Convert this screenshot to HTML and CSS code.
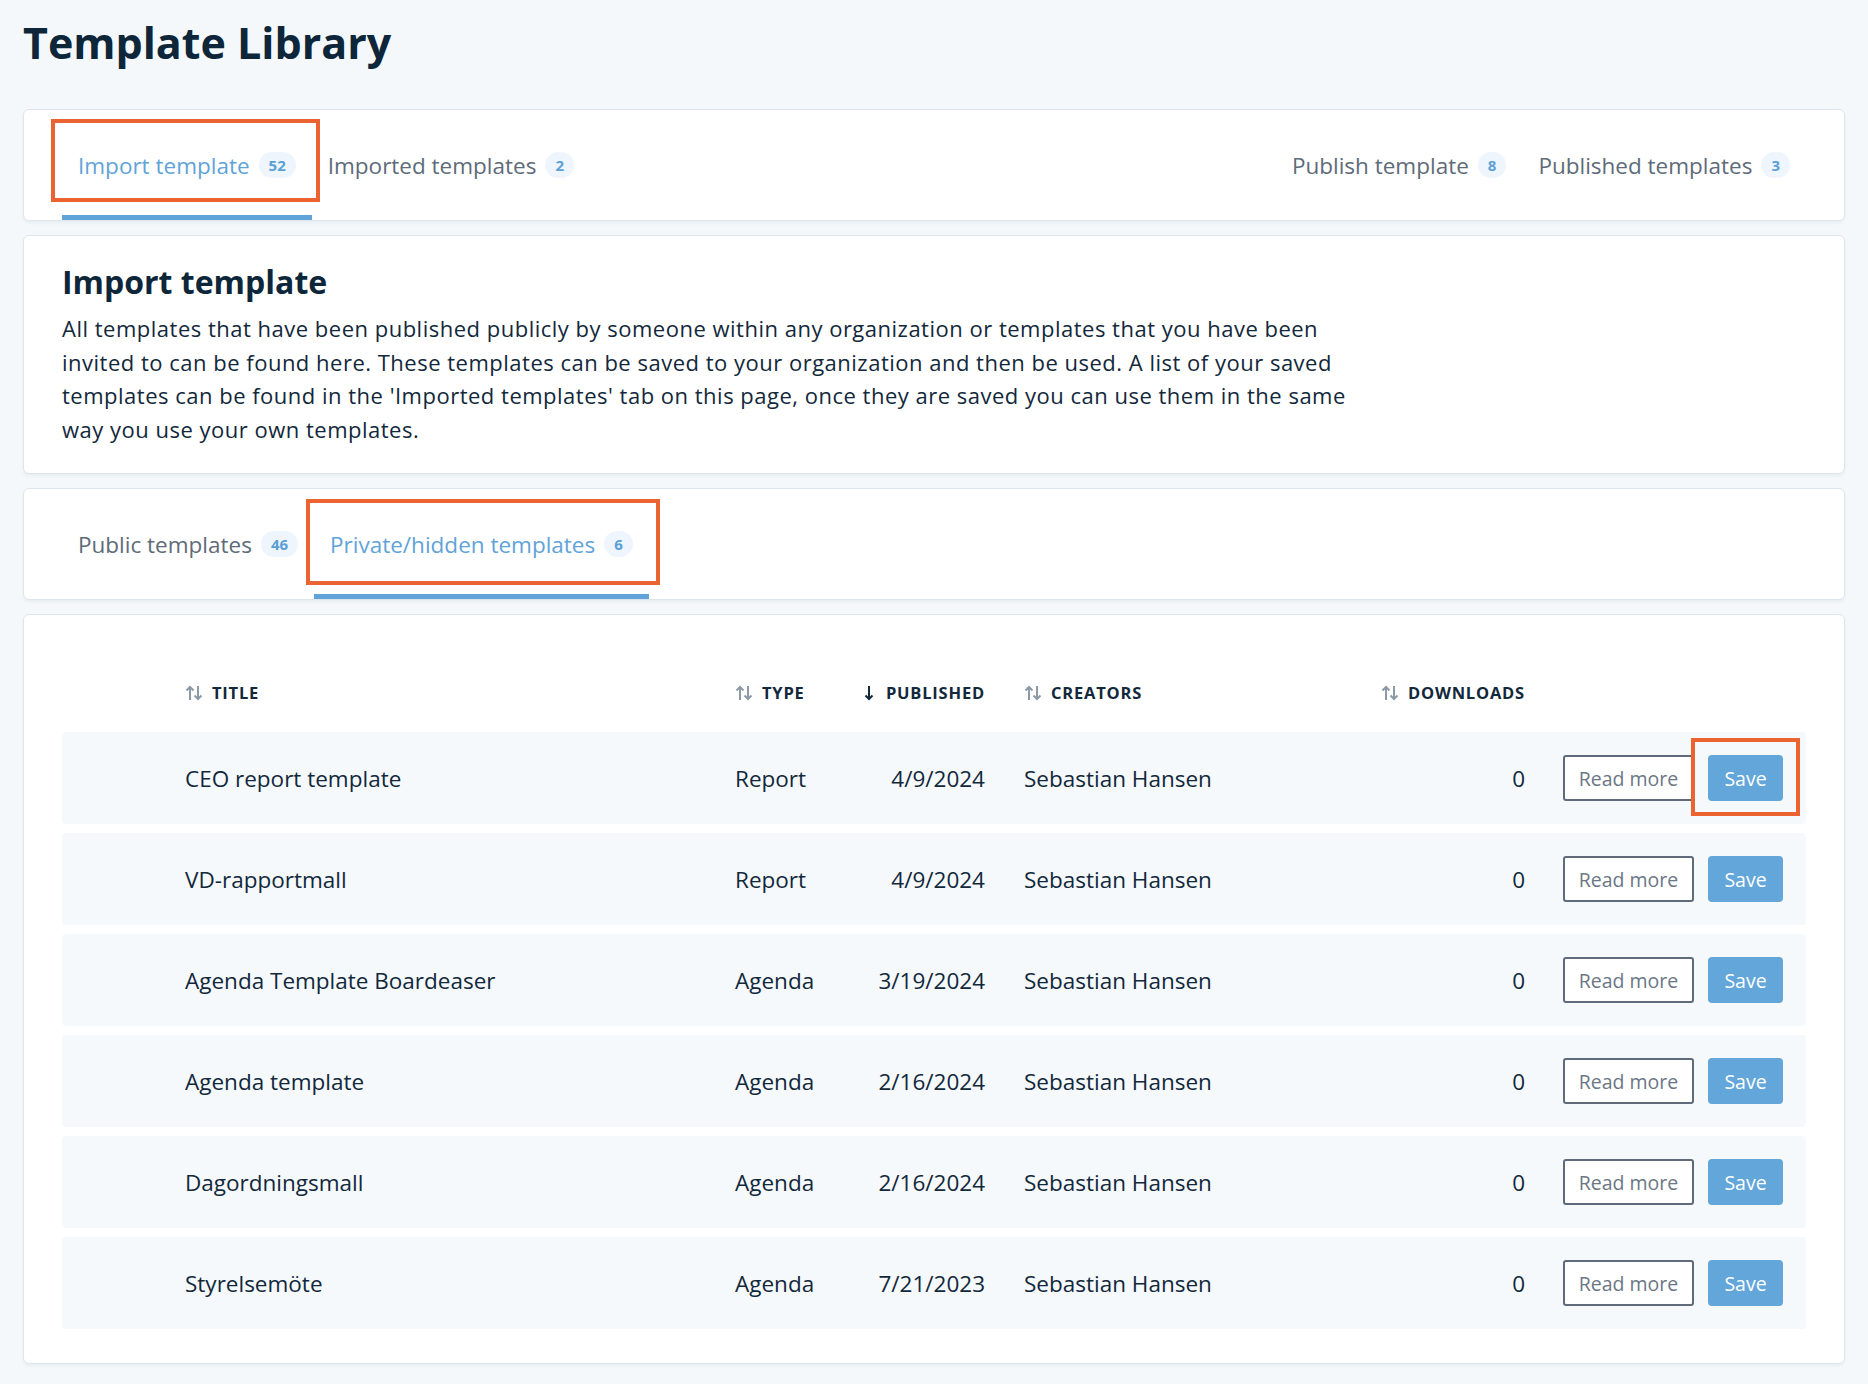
FILE: index.html
```html
<!DOCTYPE html>
<html lang="en">
<head>
    <meta charset="UTF-8">
    <meta name="viewport" content="width=device-width, initial-scale=1.0">
    <title>Template Library</title>
    <link rel="stylesheet" href="styles.css">
</head>
<body>

<main class="page">
    <h1 class="page-title">Template Library</h1>

    <div class="card tabs-card">
        <nav class="tabs">
            <div class="tab-group">
                <a class="tab active">Import template <span class="badge">52</span><span class="highlight hl-import"></span></a>
                <a class="tab">Imported templates <span class="badge">2</span></a>
            </div>
            <div class="tab-group">
                <a class="tab">Publish template <span class="badge">8</span></a>
                <a class="tab">Published templates <span class="badge">3</span></a>
            </div>
        </nav>
    </div>

    <section class="card intro-card">
        <h2 class="intro-title">Import template</h2>
        <p class="intro-text">All templates that have been published publicly by someone within any organization or templates that you have been invited to can be found here. These templates can be saved to your organization and then be used. A list of your saved templates can be found in the 'Imported templates' tab on this page, once they are saved you can use them in the same way you use your own templates.</p>
    </section>

    <div class="card tabs-card">
        <nav class="tabs">
            <div class="tab-group">
                <a class="tab">Public templates <span class="badge">46</span></a>
                <a class="tab active">Private/hidden templates <span class="badge">6</span><span class="highlight hl-private"></span></a>
            </div>
        </nav>
    </div>

    <section class="card table-card">
        <div class="table-head">
            <div></div>
            <div class="th"><svg class="sort-icon" viewBox="0 0 18 16"><path d="M5 15V2M1.5 5.5L5 2l3.5 3.5M13 1v13M9.5 10.5L13 14l3.5-3.5"/></svg>TITLE</div>
            <div class="th"><svg class="sort-icon" viewBox="0 0 18 16"><path d="M5 15V2M1.5 5.5L5 2l3.5 3.5M13 1v13M9.5 10.5L13 14l3.5-3.5"/></svg>TYPE</div>
            <div class="th right"><svg class="sort-icon down" viewBox="0 0 12 16"><path d="M6 1v13M2.5 10.5L6 14l3.5-3.5"/></svg>PUBLISHED</div>
            <div class="th creators"><svg class="sort-icon" viewBox="0 0 18 16"><path d="M5 15V2M1.5 5.5L5 2l3.5 3.5M13 1v13M9.5 10.5L13 14l3.5-3.5"/></svg>CREATORS</div>
            <div class="th right"><svg class="sort-icon" viewBox="0 0 18 16"><path d="M5 15V2M1.5 5.5L5 2l3.5 3.5M13 1v13M9.5 10.5L13 14l3.5-3.5"/></svg>DOWNLOADS</div>
            <div></div>
        </div>

        <div class="rows">
            <div class="row">
                <div></div>
                <div>CEO report template</div>
                <div>Report</div>
                <div class="right">4/9/2024</div>
                <div class="creators">Sebastian Hansen</div>
                <div class="right">0</div>
                <div class="actions"><button class="btn-outline">Read more</button><button class="btn-save">Save<span class="highlight hl-save"></span></button></div>
            </div>
            <div class="row">
                <div></div>
                <div>VD-rapportmall</div>
                <div>Report</div>
                <div class="right">4/9/2024</div>
                <div class="creators">Sebastian Hansen</div>
                <div class="right">0</div>
                <div class="actions"><button class="btn-outline">Read more</button><button class="btn-save">Save</button></div>
            </div>
            <div class="row">
                <div></div>
                <div>Agenda Template Boardeaser</div>
                <div>Agenda</div>
                <div class="right">3/19/2024</div>
                <div class="creators">Sebastian Hansen</div>
                <div class="right">0</div>
                <div class="actions"><button class="btn-outline">Read more</button><button class="btn-save">Save</button></div>
            </div>
            <div class="row">
                <div></div>
                <div>Agenda template</div>
                <div>Agenda</div>
                <div class="right">2/16/2024</div>
                <div class="creators">Sebastian Hansen</div>
                <div class="right">0</div>
                <div class="actions"><button class="btn-outline">Read more</button><button class="btn-save">Save</button></div>
            </div>
            <div class="row">
                <div></div>
                <div>Dagordningsmall</div>
                <div>Agenda</div>
                <div class="right">2/16/2024</div>
                <div class="creators">Sebastian Hansen</div>
                <div class="right">0</div>
                <div class="actions"><button class="btn-outline">Read more</button><button class="btn-save">Save</button></div>
            </div>
            <div class="row">
                <div></div>
                <div>Styrelsemöte</div>
                <div>Agenda</div>
                <div class="right">7/21/2023</div>
                <div class="creators">Sebastian Hansen</div>
                <div class="right">0</div>
                <div class="actions"><button class="btn-outline">Read more</button><button class="btn-save">Save</button></div>
            </div>
        </div>
    </section>
</main>

</body>
</html>
```

FILE: styles.css
```css
body {
    font-family: 'Open Sans', 'Lato', sans-serif;
    margin: 0;
    background-color: #f4f8fb;
    color: #12283b;
}
.page {
    padding: 15px 23px 22px;
    display: flex;
    flex-direction: column;
    gap: 14px;
}
.page-title {
    margin: 0 0 25px;
    font-size: 43px;
    line-height: 55px;
    font-weight: 700;
    color: #0d2639;
}
.card {
    background-color: #ffffff;
    border: 1px solid #dfe5ec;
    border-radius: 6px;
    box-shadow: 0 2px 3px rgba(30, 60, 90, 0.06);
}
.tabs-card {
    padding: 0 38px;
}
.tabs {
    display: flex;
    justify-content: space-between;
}
.tab-group {
    display: flex;
}
.tab {
    position: relative;
    display: flex;
    align-items: center;
    box-sizing: border-box;
    height: 110px;
    padding: 5px 16px 0;
    border-bottom: 5px solid transparent;
    font-size: 22.5px;
    color: #5e6b78;
    cursor: pointer;
}
.tab.active {
    color: #5fa3d8;
    border-bottom-color: #5fa3d8;
}
.badge {
    margin-left: 9px;
    height: 26px;
    min-width: 27px;
    padding: 0 10px;
    box-sizing: border-box;
    border-radius: 13px;
    background-color: #eef5fc;
    color: #5a9fd6;
    font-size: 15px;
    font-weight: 700;
    display: flex;
    align-items: center;
    justify-content: center;
}
.highlight {
    position: absolute;
    border: 4px solid #ea6330;
    pointer-events: none;
}
.hl-import {
    top: 9px;
    bottom: 13px;
    left: -11px;
    right: -8px;
}
.hl-private {
    top: 10px;
    bottom: 9px;
    left: -8px;
    right: -11px;
}
.hl-save {
    top: -17px;
    bottom: -15px;
    left: -17px;
    right: -17px;
}
.intro-card {
    padding: 26px 38px 27px;
}
.intro-title {
    margin: 0 0 10px;
    font-size: 32px;
    line-height: 40px;
    font-weight: 700;
    color: #0d2639;
}
.intro-text {
    margin: 0;
    max-width: 1305px;
    font-size: 22px;
    letter-spacing: 0.5px;
    line-height: 33.5px;
}
.table-card {
    padding: 38px 38px 34px;
}
.table-head,
.row {
    display: grid;
    grid-template-columns: 123px 550px 107px 143px 357px 183px 1fr;
    align-items: center;
}
.table-head {
    height: 79px;
}
.th {
    display: flex;
    align-items: center;
    font-size: 16.5px;
    font-weight: 700;
    letter-spacing: 0.8px;
    color: #12283b;
}
.sort-icon {
    width: 18px;
    height: 16px;
    margin-right: 9px;
    fill: none;
    stroke: #8c99a6;
    stroke-width: 2;
}
.sort-icon.down {
    width: 12px;
    stroke: #12283b;
    margin-right: 11px;
}
.th.right {
    justify-content: flex-end;
}
.right {
    text-align: right;
}
.creators {
    padding-left: 39px;
}
.rows {
    display: flex;
    flex-direction: column;
    gap: 9px;
}
.row {
    height: 92px;
    background-color: #f5f9fc;
    border-radius: 4px;
    font-size: 22.5px;
    color: #12283b;
}
.actions {
    display: flex;
    justify-content: flex-end;
    gap: 14px;
    padding-right: 23px;
}
.actions button {
    height: 46px;
    font-family: inherit;
    font-size: 19.5px;
    cursor: pointer;
}
.btn-outline {
    width: 131px;
    background-color: #ffffff;
    border: 2px solid #5f6b7a;
    border-radius: 3px;
    color: #6b7785;
}
.btn-save {
    position: relative;
    width: 75px;
    background-color: #62a6da;
    border: none;
    border-radius: 4px;
    color: #ffffff;
}
```
